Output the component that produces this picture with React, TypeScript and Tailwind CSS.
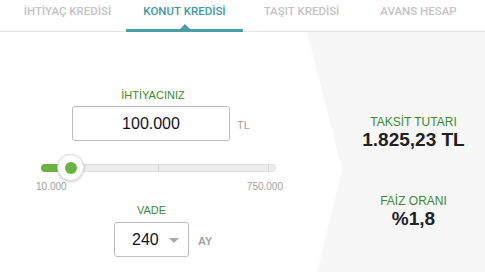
const tabs = ["İHTİYAÇ KREDİSİ", "KONUT KREDİSİ", "TAŞIT KREDİSİ", "AVANS HESAP"];

export default function App() {
  return (
    <div className="w-[485px] h-[272px] bg-white overflow-hidden font-['Liberation_Sans',Arial,sans-serif]">
      {/* tabs */}
      <div className="h-[32px] border-b border-[#e4e4e4] flex pl-[9px]">
        {tabs.map((t, i) => (
          <div
            key={t}
            className={`relative w-[117px] text-center pt-[4px] text-[11.5px] leading-[14px] font-medium font-['Roboto',sans-serif] ${
              i === 1 ? "text-[#3f9aa2]" : "text-[#c3c3c3]"
            }`}
          >
            {t}
            {i === 1 && (
              <>
                <div className="absolute left-0 right-0 bottom-[-1px] h-[3px] bg-[#4a9ea5]" />
                <div className="absolute left-1/2 -translate-x-1/2 bottom-[2px] w-0 h-0 border-l-[5px] border-r-[5px] border-b-[5px] border-l-transparent border-r-transparent border-b-[#4a9ea5]" />
              </>
            )}
          </div>
        ))}
      </div>

      <div className="flex h-[240px]">
        {/* left form */}
        <div className="w-[307px] shrink-0 flex flex-col">
          <div className="mt-[57px] ml-[72px] w-[162px] text-center text-[11px] leading-[13px] text-[#3b8a2f]">
            İHTİYACINIZ
          </div>
          <div className="mt-[4px] ml-[72px] flex items-center">
            <div className="w-[158px] h-[35px] border border-[#bdbdbd] rounded-[3px] flex items-center justify-center text-[16px] text-[#10102a]">
              100.000
            </div>
            <span className="ml-[7px] mt-[4px] text-[11px] text-[#a3a3a3]">TL</span>
          </div>

          {/* slider */}
          <div className="relative ml-[41px] mt-[23px] w-[235px] h-[8px] rounded-full bg-[#ececec] border border-[#dedede]">
            <div className="absolute left-[-1px] top-[-1px] h-[8px] w-[30px] rounded-l-full bg-[#6ab23e]" />
            <div className="absolute left-[116px] top-0 h-[6px] w-px bg-[#d2d2d2]" />
            <div className="absolute left-[226px] top-0 h-[6px] w-px bg-[#d2d2d2]" />
            <div className="absolute left-[15px] top-[-11px] w-[27px] h-[27px] rounded-full bg-white border border-[#dcdcdc] shadow-[0_1px_3px_rgba(0,0,0,0.2)] flex items-center justify-center">
              <div className="w-[12px] h-[12px] rounded-full bg-[#6ab23e]" />
            </div>
          </div>
          <div className="mt-[9px] ml-[36px] w-[247px] flex justify-between text-[10px] leading-[12px] text-[#a0a0a0]">
            <span>10.000</span>
            <span>750.000</span>
          </div>

          <div className="mt-[11px] ml-[114px] w-[75px] text-center text-[11px] leading-[13px] text-[#3b8a2f]">
            VADE
          </div>
          <div className="mt-[5px] ml-[114px] flex items-center">
            <div className="w-[75px] h-[35px] border border-[#bdbdbd] rounded-[3px] flex items-center pl-[17px] text-[16px] text-[#10102a]">
              <span>240</span>
              <span className="ml-[10px] mt-[2px] w-0 h-0 border-l-[5px] border-r-[5px] border-t-[5px] border-l-transparent border-r-transparent border-t-[#a8a8a8]" />
            </div>
            <span className="ml-[9px] mt-[3px] text-[11px] font-bold text-[#a3a3a3]">AY</span>
          </div>
        </div>

        {/* result panel */}
        <div className="flex-1 bg-[#f7f7f7] [clip-path:polygon(0_0,100%_0,100%_100%,10px_100%,35px_138px)] flex flex-col items-center pl-[35px] pt-[83px]">
          <div className="text-[12px] leading-[14px] text-[#3b8a2f]">TAKSİT TUTARI</div>
          <div className="text-[19px] leading-[22px] font-bold text-[#222]">1.825,23 TL</div>
          <div className="mt-[43px] text-[12px] leading-[14px] text-[#3b8a2f]">FAİZ ORANI</div>
          <div className="text-[19px] leading-[22px] font-bold text-[#222]">%1,8</div>
        </div>
      </div>
    </div>
  );
}
